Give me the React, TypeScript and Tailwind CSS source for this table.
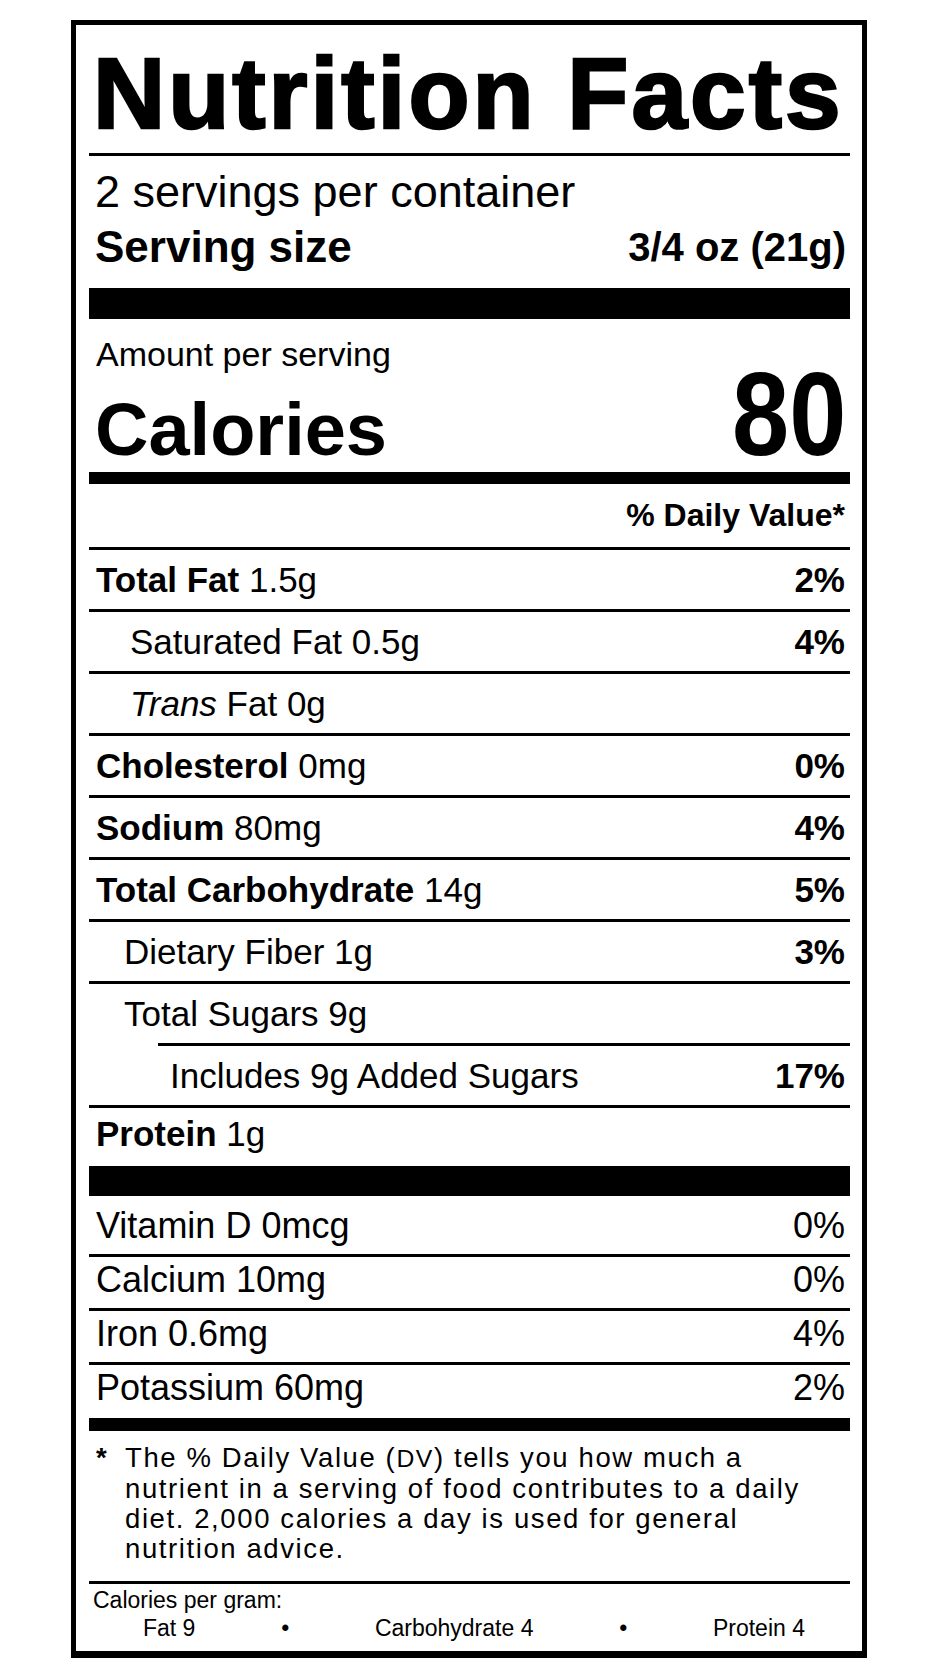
const NUTRIENTS = [
  { bold: 'Total Fat', amount: ' 1.5g', dv: '2%', pad: 'pl-[7px]' },
  { label: 'Saturated Fat 0.5g', dv: '4%', pad: 'pl-[41px]' },
  { italic: 'Trans', label: ' Fat 0g', dv: '', pad: 'pl-[41px]' },
  { bold: 'Cholesterol', amount: ' 0mg', dv: '0%', pad: 'pl-[7px]' },
  { bold: 'Sodium', amount: ' 80mg', dv: '4%', pad: 'pl-[7px]' },
  { bold: 'Total Carbohydrate', amount: ' 14g', dv: '5%', pad: 'pl-[7px]' },
  { label: 'Dietary Fiber 1g', dv: '3%', pad: 'pl-[35px]' },
  { label: 'Total Sugars 9g', dv: '', pad: 'pl-[35px]', shortLine: true },
  { label: 'Includes 9g Added Sugars', dv: '17%', pad: 'pl-[81px]' },
];

const VITAMINS = [
  { label: 'Vitamin D 0mcg', dv: '0%', box: 'h-[58px] pt-[7px]' },
  { label: 'Calcium 10mg', dv: '0%', box: 'h-[51px]' },
  { label: 'Iron 0.6mg', dv: '4%', box: 'h-[51px]' },
  { label: 'Potassium 60mg', dv: '2%', box: 'h-[53px]', last: true },
];

export default function App() {
  return (
    <div className="min-h-screen bg-white text-black font-['Liberation_Sans',Arial,sans-serif] pt-[20px]">
      <div className="w-[796px] mx-auto border-[5px] border-b-[7px] border-black pl-[13px] pr-[12px]">
        {/* Title */}
        <div className="h-[128px] pt-[9px] pl-[4px] text-[100px] leading-[119px] font-bold tracking-[3px] whitespace-nowrap [-webkit-text-stroke:2.5px_#000]">
          Nutrition Facts
        </div>
        <div className="h-[3px] bg-black" />

        {/* Servings */}
        <div className="pt-[11px] pb-[16px] pl-[6px] pr-[4px]">
          <div className="text-[45px] leading-[50px]">2 servings per container</div>
          <div className="mt-[5px] flex justify-between text-[44px] leading-[50px] font-bold">
            <span>Serving size</span>
            <span className="text-[40px]">3/4 oz (21g)</span>
          </div>
        </div>
        <div className="h-[31px] bg-black" />

        {/* Calories */}
        <div className="pt-[15px] pl-[7px] text-[34px] leading-[40px]">Amount per serving</div>
        <div className="h-[98px] flex justify-between items-baseline pl-[6px] pr-[4px] font-bold">
          <span className="text-[74px] leading-[80px]">Calories</span>
          <span className="inline-block text-[118px] leading-[80px] scale-x-[0.87] origin-right">80</span>
        </div>
        <div className="h-[12px] bg-black" />

        <div className="h-[63px] pt-[11px] pr-[5px] text-right text-[32px] leading-[40px] font-bold">% Daily Value*</div>
        <div className="h-[3px] bg-black" />

        {/* Nutrients */}
        {NUTRIENTS.map((n, i) => (
          <div key={i}>
            <div className={`h-[59px] flex justify-between items-baseline pr-[5px] text-[35px] leading-[59px] whitespace-nowrap ${n.pad}`}>
              <span>
                {n.bold && <span className="font-bold">{n.bold}</span>}
                {n.italic && <span className="italic">{n.italic}</span>}
                {n.label}
                {n.amount}
              </span>
              <span className="font-bold">{n.dv}</span>
            </div>
            <div className={n.shortLine ? 'h-[3px] bg-black ml-[69px]' : 'h-[3px] bg-black'} />
          </div>
        ))}

        <div className="h-[58px] pl-[7px] text-[35px] leading-[52px]">
          <span className="font-bold">Protein</span> 1g
        </div>
        <div className="h-[30px] bg-black" />

        {/* Vitamins and minerals */}
        {VITAMINS.map((v, i) => (
          <div key={i}>
            <div className={`flex justify-between pl-[7px] pr-[5px] text-[36px] leading-[45px] ${v.box}`}>
              <span>{v.label}</span>
              <span>{v.dv}</span>
            </div>
            {!v.last && <div className="h-[3px] bg-black" />}
          </div>
        ))}
        <div className="h-[13px] bg-black" />

        {/* Footnote */}
        <div className="flex pt-[12px] pb-[17px] pl-[7px] text-[27.5px] leading-[30px] tracking-[1.6px] whitespace-nowrap">
          <span className="w-[29px] font-bold">*</span>
          <p>
            The % Daily Value (<span className="text-[0.9em]">DV</span>) tells you how much a
            <br />
            nutrient in a serving of food contributes to a daily
            <br />
            diet. 2,000 calories a day is used for general
            <br />
            nutrition advice.
          </p>
        </div>
        <div className="h-[3px] bg-black" />

        <div className="pt-[3px] pb-[10px] text-[23px] leading-[26px]">
          <div className="pl-[4px]">Calories per gram:</div>
          <div className="mt-[2px] flex justify-between pl-[54px] pr-[45px]">
            <span>Fat 9</span>
            <span>•</span>
            <span>Carbohydrate 4</span>
            <span>•</span>
            <span>Protein 4</span>
          </div>
        </div>
      </div>
    </div>
  );
}
